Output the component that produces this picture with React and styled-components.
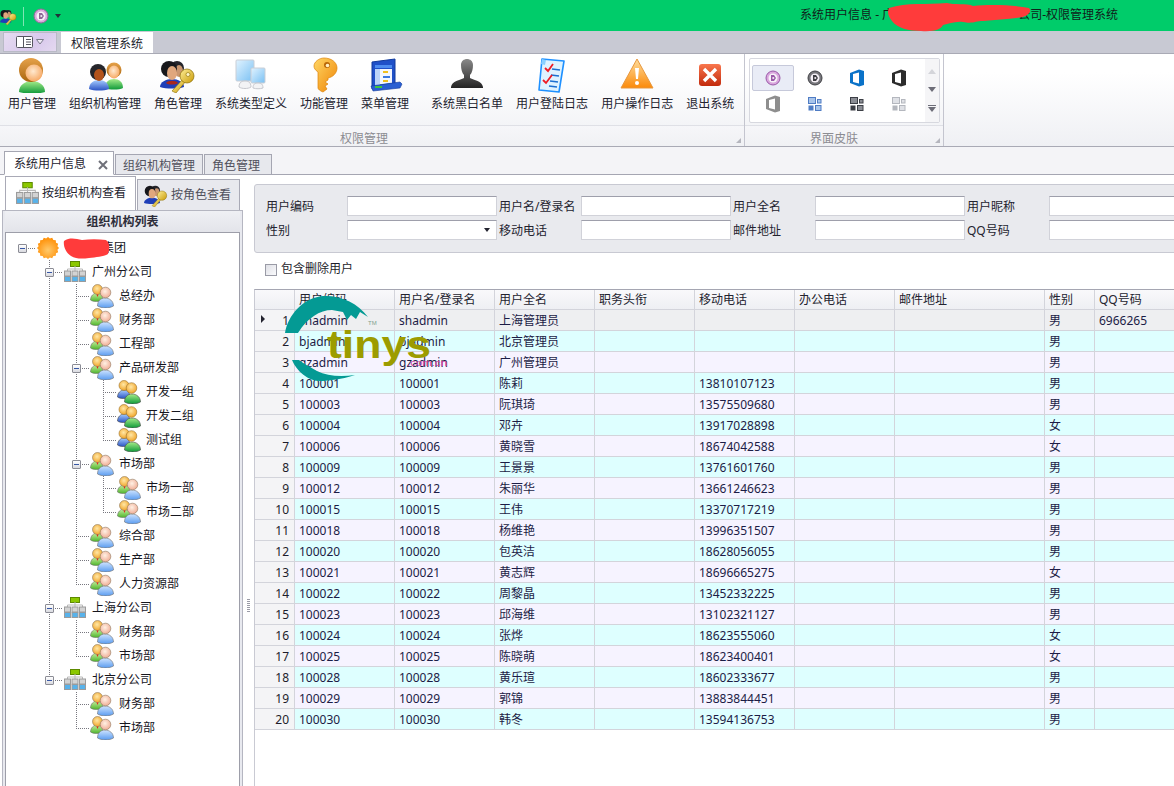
import React from "react";
import styled, { createGlobalStyle } from "styled-components";

const GlobalStyle = createGlobalStyle`
  html, body, #root {
    margin: 0;
    height: 100%;
    overflow: hidden;
    background: #fff;
  }
  body {
    font: 12px/1.2 "Noto Sans", "Noto Sans CJK SC", sans-serif;
    color: #1d1d2b;
  }
  * {
    box-sizing: border-box;
  }
`;

const Page = styled.div`
  position: relative;
  display: flex;
  flex-direction: column;
  height: 786px;
  overflow: hidden;
`;

/* title bar */
const TitleBar = styled.div`
  display: flex;
  align-items: center;
  height: 31px;
  background: #00cc6a;
`;

const QuickTools = styled.div`
  display: flex;
  align-items: center;
  height: 100%;
  padding-top: 1px;
`;

const QuickDivider = styled.span`
  width: 1px;
  height: 19px;
  margin: 0 9px 0 6px;
  background: #7fe5b4;
`;

const SmallCaret = styled.span`
  width: 0;
  height: 0;
  margin-left: 6px;
  border-left: 3px solid transparent;
  border-right: 3px solid transparent;
  border-top: 4px solid #22313a;
`;

const Title = styled.div`
  position: relative;
  margin-left: auto;
  margin-right: 56px;
  color: #10201a;
  white-space: nowrap;
`;

const TitleGap = styled.span`
  display: inline-block;
  width: 124px;
`;

const TitleScribble = styled.svg`
  position: absolute;
  left: 87px;
  top: -6px;
`;

/* ribbon */
const RibbonTabs = styled.div`
  display: flex;
  align-items: flex-end;
  height: 22px;
  padding-left: 3px;
  background: #c8c9d3;
`;

const FileButton = styled.div`
  display: flex;
  align-items: center;
  justify-content: center;
  gap: 2px;
  width: 54px;
  height: 20px;
  margin-bottom: 1px;
  border: 1px solid #b9bac6;
  background: linear-gradient(135deg, #e6dcf1, #d9c9ec 60%, #e4d9f0);
`;

const RibbonTab = styled.div`
  display: flex;
  align-items: center;
  justify-content: center;
  width: 92px;
  height: 21px;
  margin-left: 4px;
  padding-top: 4px;
  background: #fff;
`;

const Ribbon = styled.div`
  display: flex;
  height: 94px;
  border-top: 1px solid #a9aab5;
  border-bottom: 1px solid #a9aab5;
  background: linear-gradient(#fff 20%, #eff0f4);
`;

const RibbonGroup = styled.div`
  display: flex;
  flex-direction: column;
  width: ${(p) => p.$width}px;
  border-right: 1px solid #c4c5cf;
`;

const GroupBody = styled.div`
  display: flex;
  height: 74px;
  padding: 3px 0 2px ${(p) => p.$left || 0}px;
  border-bottom: 1px solid #dfe0e6;
`;

const GroupLabel = styled.div`
  position: relative;
  display: flex;
  align-items: center;
  justify-content: center;
  flex: 1;
  padding: 6px ${(p) => p.$shift}px 0 0;
  color: #8c8c92;
  background: linear-gradient(#f6f6f9, #f0f1f4);
`;

const Launcher = styled.span`
  position: absolute;
  right: 3px;
  bottom: 3px;
  width: 0;
  height: 0;
  border-left: 5px solid transparent;
  border-bottom: 5px solid #b5b6be;
`;

const RibbonItem = styled.div`
  display: flex;
  flex-direction: column;
  align-items: center;
  margin-right: 13px;
  white-space: nowrap;
  color: #23232f;
`;

const ItemIcon = styled.div`
  height: 40px;
  line-height: 0;
`;

const RibbonSep = styled.span`
  width: 1px;
  margin: 0 12px 0 -3px;
  background: #e3e4e9;
`;

const Gallery = styled.div`
  display: flex;
  width: 191px;
  height: 65px;
  margin: 1px 0 0 4px;
  border: 1px solid #d7d8df;
  border-radius: 2px;
  background: #fff;
`;

const GalleryGrid = styled.div`
  display: grid;
  grid-template-columns: repeat(4, 42px);
  grid-auto-rows: 26px;
  width: 175px;
  padding: 6px 0 0 2px;
`;

const GalleryCell = styled.div`
  display: flex;
  align-items: center;
  justify-content: center;
  border: 1px solid ${(p) => (p.$active ? "#c6c9da" : "transparent")};
  border-radius: 2px;
  background: ${(p) => (p.$active ? "#e9ecf6" : "transparent")};
`;

const GalleryScroll = styled.div`
  display: flex;
  flex: 1;
  flex-direction: column;
  align-items: center;
  justify-content: space-around;
  padding: 3px 0;
  background: #f5f5f7;
`;

const ScrollArrow = styled.span`
  width: 0;
  height: 0;
  border-left: 4px solid transparent;
  border-right: 4px solid transparent;
  ${(p) =>
    p.$up
      ? `border-bottom: 5px solid ${p.$color};`
      : `border-top: 5px solid ${p.$color};`}
`;

const ScrollMore = styled.span`
  display: flex;
  flex-direction: column;
  align-items: center;
  gap: 1px;
  &::before {
    content: "";
    width: 8px;
    height: 1px;
    background: #6d6d78;
  }
`;

const RibbonRest = styled.div`
  flex: 1;
`;

/* document tabs */
const DocStrip = styled.div`
  display: flex;
  align-items: flex-end;
  height: 28px;
  padding-left: 4px;
  border-bottom: 1px solid #a5a6b2;
  background: #f4f4f7;
`;

const DocTab = styled.div`
  display: flex;
  align-items: center;
  justify-content: space-between;
  width: ${(p) => p.$width}px;
  height: ${(p) => (p.$active ? 24 : 21)}px;
  margin-right: 1px;
  margin-bottom: -1px;
  padding: 3px 5px 0 ${(p) => (p.$active ? 9 : 7)}px;
  border: 1px solid #a5a6b2;
  border-bottom: ${(p) => (p.$active ? "1px solid #fff" : "1px solid #a5a6b2")};
  background: ${(p) => (p.$active ? "#fff" : "#e7e8ed")};
  color: ${(p) => (p.$active ? "#23232f" : "#50505c")};
`;

const Body = styled.div`
  display: flex;
  flex: 1;
  min-height: 0;
`;

/* left pane */
const LeftPane = styled.div`
  display: flex;
  flex-direction: column;
  width: 241px;
  margin-left: 2px;
  flex-shrink: 0;
`;

const SubTabs = styled.div`
  display: flex;
  align-items: flex-end;
  height: 35px;
  padding-left: 3px;
`;

const SubTab = styled.div`
  display: flex;
  align-items: center;
  gap: 3px;
  width: ${(p) => p.$width}px;
  height: ${(p) => (p.$active ? 34 : 31)}px;
  margin-right: 1px;
  padding-left: ${(p) => (p.$active ? 10 : 6)}px;
  border: 1px solid #a9aab6;
  border-bottom: 0;
  background: ${(p) => (p.$active ? "#fff" : "#e8e9ee")};
  color: ${(p) => (p.$active ? "#23232f" : "#50505c")};
`;

const TreePanel = styled.div`
  display: flex;
  flex-direction: column;
  flex: 1;
  min-height: 0;
  border: 1px solid #b5b6c1;
  border-bottom: 0;
  padding: 0 2px;
  background: #e8e9ef;
`;

const PanelHeader = styled.div`
  display: flex;
  align-items: center;
  justify-content: center;
  height: 21px;
  padding-top: 2px;
  flex-shrink: 0;
  font-weight: 700;
  color: #2d2d3a;
  background: linear-gradient(#eff0f4, #e3e4ea);
`;

const TreeBox = styled.div`
  flex: 1;
  padding: 3px 0 0 3px;
  border: 1px solid #9d9ea9;
  border-bottom: 0;
  background: #fff;
  overflow: hidden;
`;

const TreeRow = styled.div`
  display: flex;
  height: 24px;
  align-items: center;
  color: #16161e;
  white-space: nowrap;
`;

const dots = (dir) =>
  `repeating-linear-gradient(${dir}, #77777f 0 1px, transparent 1px 2px)`;

const Guide = styled.span`
  display: flex;
  align-items: center;
  justify-content: center;
  align-self: stretch;
  flex-shrink: 0;
  width: 27px;
  padding-right: 1px;
  background-repeat: no-repeat;
  background-image: ${(p) =>
    [
      p.$line ? dots("to bottom") : null,
      p.$branch ? dots("to right") : null,
    ]
      .filter(Boolean)
      .join(",") || "none"};
  background-size: ${(p) =>
    [
      p.$line ? `1px ${p.$line === "half" ? "50%" : "100%"}` : null,
      p.$branch ? "14px 1px" : null,
    ]
      .filter(Boolean)
      .join(",") || "auto"};
  background-position: ${(p) =>
    [p.$line ? "13px 0" : null, p.$branch ? "13px 12px" : null]
      .filter(Boolean)
      .join(",") || "0 0"};
`;

const Expander = styled.span`
  display: flex;
  align-items: center;
  justify-content: center;
  width: 9px;
  height: 9px;
  border: 1px solid #8b8c95;
  border-radius: 1px;
  background: linear-gradient(#fff, #d9dae0);
  &::before {
    content: "";
    width: 5px;
    height: 1px;
    background: #3757a5;
  }
`;

const TreeIconSlot = styled.span`
  display: flex;
  justify-content: center;
  width: 24px;
  margin: 0 5px 0 0;
  line-height: 0;
  flex-shrink: 0;
`;

const InlineScribble = styled.svg`
  position: relative;
  z-index: 1;
  margin: 0 -8px 0 -3px;
  flex-shrink: 0;
`;

const Splitter = styled.div`
  display: flex;
  justify-content: center;
  width: 11px;
  padding-top: 424px;
  flex-shrink: 0;
`;

const Grip = styled.span`
  width: 3px;
  height: 14px;
  background: repeating-linear-gradient(#9a9ba6 0 1px, transparent 1px 2px);
`;

/* right pane */
const RightPane = styled.div`
  display: flex;
  flex-direction: column;
  flex: 1;
  min-width: 0;
  padding-top: 9px;
  overflow: hidden;
`;

const FilterBox = styled.div`
  display: grid;
  grid-template-columns: 81px 150px 84px 150px 84px 150px 84px 150px;
  grid-auto-rows: 20px;
  row-gap: 4px;
  align-items: center;
  width: 960px;
  height: 69px;
  padding: 11px 0 0 11px;
  border: 1px solid #c8c9d2;
  border-radius: 3px;
  background: #e9eaee;
  flex-shrink: 0;
`;

const FieldLabel = styled.label`
  padding: 3px 0 0 ${(p) => (p.$first ? 0 : 2)}px;
  color: #23232f;
  white-space: nowrap;
`;

const FieldInput = styled.input`
  width: 100%;
  height: 20px;
  padding: 0 3px;
  border: 1px solid #d1d2d9;
  border-top-color: #9e9fab;
  border-radius: 0;
  background: #fff;
  outline: none;
`;

const SelectBox = styled.div`
  display: flex;
  align-items: center;
  justify-content: flex-end;
  height: 20px;
  padding-right: 6px;
  border: 1px solid #d1d2d9;
  border-top-color: #9e9fab;
  background: #fff;
  &::after {
    content: "";
    border-left: 3px solid transparent;
    border-right: 3px solid transparent;
    border-top: 4px solid #23232f;
  }
`;

const CheckRow = styled.label`
  display: flex;
  align-items: center;
  gap: 4px;
  height: 36px;
  padding: 0 0 3px 11px;
  flex-shrink: 0;
`;

const CheckBox = styled.input`
  appearance: none;
  width: 12px;
  height: 12px;
  margin: 0;
  border: 1px solid #9a9ba6;
  background: linear-gradient(135deg, #dfe0e6, #fafafc);
`;

const GridWrap = styled.div`
  flex: 1;
  min-height: 0;
  border-left: 1px solid #c9cad3;
  border-top: 1px solid #a5a6b2;
  overflow: hidden;
`;

const Grid = styled.table`
  width: 940px;
  table-layout: fixed;
  border-collapse: separate;
  border-spacing: 0;
`;

const HeadCell = styled.th`
  height: 20px;
  padding: 1px 4px 0;
  font-weight: 400;
  text-align: left;
  color: #23232f;
  white-space: nowrap;
  border-right: 1px solid #d3d4db;
  border-bottom: 1px solid #d3d4db;
  background: linear-gradient(#f9f9fb, #eeeff3);
`;

const NumCell = styled.td`
  height: 21px;
  padding: 2px 5px 0 0;
  text-align: right;
  color: #1d1d2b;
  border-right: 1px solid #d3d4db;
  border-bottom: 1px solid #d3d4db;
  background: #f4f4f6;
`;

const Indicator = styled.span`
  float: left;
  width: 0;
  height: 0;
  margin: 1px 0 0 6px;
  border-top: 4px solid transparent;
  border-bottom: 4px solid transparent;
  border-left: 4px solid #23232f;
`;

const Cell = styled.td`
  height: 21px;
  padding: 2px 4px 0;
  color: #1c1c46;
  white-space: nowrap;
  overflow: hidden;
  border-right: 1px solid #d3d4db;
  border-bottom: 1px solid #d3d4db;
  background: ${(p) =>
    p.$selected ? "#eeeff1" : p.$odd ? "#f6f3ff" : "#deffff"};
`;

/* the logo that was stamped over the picture */
const Watermark = styled.svg`
  position: absolute;
  left: 285px;
  top: 290px;
  pointer-events: none;
`;

const Defs = () => (
  <svg width="0" height="0" style={{ display: "block" }}>
    <defs>
      <radialGradient id="skin" cx="45%" cy="40%" r="65%">
        <stop offset="0" stopColor="#ffe9cf" />
        <stop offset="1" stopColor="#f6a45c" />
      </radialGradient>
      <linearGradient id="hair" x1="0" y1="0" x2="0" y2="1">
        <stop offset="0" stopColor="#e6a24a" />
        <stop offset="1" stopColor="#a9650f" />
      </linearGradient>
      <linearGradient id="green" x1="0" y1="0" x2="0" y2="1">
        <stop offset="0" stopColor="#a6ec8a" />
        <stop offset="1" stopColor="#0f9a3a" />
      </linearGradient>
      <linearGradient id="blue" x1="0" y1="0" x2="0" y2="1">
        <stop offset="0" stopColor="#a6ccff" />
        <stop offset="1" stopColor="#2b54c4" />
      </linearGradient>
      <linearGradient id="palegreen" x1="0" y1="0" x2="0" y2="1">
        <stop offset="0" stopColor="#c6efa0" />
        <stop offset="1" stopColor="#4fb52c" />
      </linearGradient>
      <linearGradient id="paleblue" x1="0" y1="0" x2="0" y2="1">
        <stop offset="0" stopColor="#cfe4ff" />
        <stop offset="1" stopColor="#5a9cf0" />
      </linearGradient>
      <radialGradient id="paleskin" cx="45%" cy="40%" r="65%">
        <stop offset="0" stopColor="#fff1e4" />
        <stop offset="1" stopColor="#efa890" />
      </radialGradient>
      <radialGradient id="yellowhead" cx="45%" cy="40%" r="65%">
        <stop offset="0" stopColor="#ffe7a6" />
        <stop offset="1" stopColor="#f0a020" />
      </radialGradient>
      <linearGradient id="gold" x1="0" y1="0" x2="1" y2="1">
        <stop offset="0" stopColor="#fff09a" />
        <stop offset="1" stopColor="#c99a06" />
      </linearGradient>
      <linearGradient id="keyorange" x1="0" y1="0" x2="1" y2="1">
        <stop offset="0" stopColor="#ffd766" />
        <stop offset="1" stopColor="#ef8404" />
      </linearGradient>
      <linearGradient id="screen" x1="0" y1="0" x2="1" y2="1">
        <stop offset="0" stopColor="#e1f3ff" />
        <stop offset="1" stopColor="#79c0f3" />
      </linearGradient>
      <linearGradient id="dark" x1="0" y1="0" x2="0" y2="1">
        <stop offset="0" stopColor="#8a8a8a" />
        <stop offset="1" stopColor="#232323" />
      </linearGradient>
      <linearGradient id="warn" x1="0" y1="0" x2="0" y2="1">
        <stop offset="0" stopColor="#ffdd9c" />
        <stop offset="1" stopColor="#fb8a0a" />
      </linearGradient>
      <linearGradient id="redbox" x1="0" y1="0" x2="0" y2="1">
        <stop offset="0" stopColor="#f9764d" />
        <stop offset="1" stopColor="#c22a0c" />
      </linearGradient>
      <radialGradient id="sun" cx="50%" cy="60%" r="60%">
        <stop offset="0" stopColor="#ffc96b" />
        <stop offset="1" stopColor="#ff8c00" />
      </radialGradient>
    </defs>
  </svg>
);

const UserIcon = () => (
  <svg width="36" height="36" viewBox="0 0 36 36">
    <path d="M5 35c0-7 6-11 13-11s13 4 13 11c-5 2-21 2-26 0z" fill="url(#green)" />
    <circle cx="17" cy="13" r="12" fill="url(#hair)" />
    <circle cx="20" cy="16" r="8.5" fill="url(#skin)" />
  </svg>
);

const GroupIcon = () => (
  <svg width="36" height="36" viewBox="0 0 36 36">
    <path d="M18 31c0-6 4-9 9-9s9 3 9 9c-4 2-14 2-18 0z" fill="url(#green)" />
    <circle cx="27" cy="13" r="7.5" fill="url(#hair)" />
    <ellipse cx="27" cy="15" rx="5.5" ry="6.5" fill="url(#skin)" />
    <path d="M2 32c0-6 5-9 10-9s10 3 10 9c-5 2-15 2-20 0z" fill="url(#blue)" />
    <circle cx="11" cy="15" r="8" fill="#26262b" />
    <ellipse cx="12" cy="18" rx="5" ry="6" fill="#b3531c" />
  </svg>
);

const RoleGlyph = ({ size, detail }) => (
  <svg width={size} height={size} viewBox="0 0 36 36">
    <circle cx="17" cy="11" r="7" fill="#24242a" />
    <ellipse cx="19" cy="14" rx="4" ry="6" fill="#c99670" />
    <path d="M0 30c0-5 6-8 12-8s12 3 12 8c-6 2-18 2-24 0z" fill="#1f3fb8" />
    {detail && <path d="M6 26c2-3 10-3 12 0-2 2-10 2-12 0z" fill="#a9281d" />}
    <circle cx="9" cy="12" r="8" fill="#17171b" />
    <ellipse cx="12" cy="16" rx="5" ry="7" fill="#e0a77d" />
    <path d="M12 34l11-12 3 2-10 12z" fill="url(#gold)" stroke="#8a6c00" strokeWidth=".6" />
    <circle cx="27" cy="19" r="7" fill="url(#gold)" stroke="#8a6c00" strokeWidth=".7" />
    {detail && <circle cx="28" cy="17.5" r="2" fill="#fff6c8" stroke="#8a6c00" strokeWidth=".6" />}
  </svg>
);

const RoleIcon = () => <RoleGlyph size={36} detail />;

const MonitorIcon = () => (
  <svg width="36" height="36" viewBox="0 0 36 36">
    <rect x="3" y="3" width="18" height="21" rx="1" fill="url(#screen)" stroke="#c9ced6" />
    <path d="M6 30c0-5 3-6 6-6s6 1 6 6c-3 2-9 2-12 0z" fill="#f2f3f5" stroke="#c6c8ce" />
    <rect x="18" y="11" width="14" height="15" rx="1" fill="url(#screen)" stroke="#c9ced6" />
    <path d="M20 31c0-4 2-5 5-5s5 1 5 5c-3 1-7 1-10 0z" fill="#f2f3f5" stroke="#c6c8ce" />
  </svg>
);

const KeyIcon = () => (
  <svg width="36" height="36" viewBox="0 0 36 36">
    <path
      d="M18 1c7 0 13 4 13 10 0 5-4 9-9 10v2l-3 2 3 2-3 2 2 3-4 3c-3-1-5-3-5-4v-16c-3-2-4-4-4-6 0-4 5-8 10-8z"
      fill="url(#keyorange)"
      stroke="#dd8207"
      strokeWidth=".7"
    />
    <circle cx="21" cy="8" r="3" fill="#b96808" />
    <circle cx="21.5" cy="8.5" r="1.8" fill="#fff0c4" />
  </svg>
);

const MenuIcon = () => (
  <svg width="36" height="36" viewBox="0 0 36 36">
    <path d="M5 5l23-3v27l-23 3z" fill="#1f50c8" stroke="#123a9c" />
    <rect x="8" y="8" width="17" height="3" fill="#4d8cf0" />
    <path d="M8 12h17v14l-17 2z" fill="#f3f7ff" />
    <path d="M8 12h5v16l-5 .4z" fill="#bcd4f8" />
    <rect x="16" y="14" width="5" height="2" fill="#f0c020" />
    <rect x="16" y="19" width="7" height="2" fill="#3a78e0" />
    <rect x="16" y="23" width="5" height="2" fill="#f0c020" />
    <path d="M4 29l29-4 2 2-2 4-27 3z" fill="#2a5fd2" stroke="#123a9c" strokeWidth=".6" />
    <rect x="8" y="29" width="7" height="2" fill="#3cc43c" />
  </svg>
);

const SilhouetteIcon = () => (
  <svg width="36" height="36" viewBox="0 0 36 36">
    <path
      d="M12 8c0-4 3-6 6-6s6 2 6 6-1 8-3 10v3c4 2 12 3 13 9v1H2v-1c1-6 9-7 13-9v-3c-2-2-3-6-3-10z"
      fill="url(#dark)"
    />
  </svg>
);

const ChecklistIcon = () => (
  <svg width="36" height="36" viewBox="0 0 36 36">
    <path d="M8 2l22 2-5 31-20-2z" fill="#dff3ff" stroke="#1e90ff" strokeWidth="1.6" strokeLinejoin="round" />
    <path d="M8 2l4 1-1 5-4-1z" fill="#8bd0ff" />
    <g stroke="#1c6fd0" strokeWidth="1.6">
      <path d="M18 12l8 1" />
      <path d="M17 18l8 1" />
      <path d="M16 24l8 1" />
      <path d="M15 29l8 1" />
    </g>
    <g fill="none" stroke="#ee1c25" strokeWidth="1.8">
      <path d="M11 11l3 3 5-7" />
      <path d="M9 23l3 3 6-8" />
    </g>
  </svg>
);

const WarnIcon = () => (
  <svg width="36" height="36" viewBox="0 0 36 36">
    <path d="M18 2l16 29H2z" fill="url(#warn)" stroke="#e7973e" strokeLinejoin="round" />
    <path d="M16 11h4l-1 11h-2z" fill="#fff" />
    <circle cx="18" cy="26" r="2" fill="#fff" />
  </svg>
);

const CloseIcon = () => (
  <svg width="36" height="36" viewBox="0 0 36 36">
    <rect x="7" y="7" width="22" height="22" rx="3" fill="url(#redbox)" />
    <path d="M12 12l12 12M24 12L12 24" stroke="#fff" strokeWidth="3.4" />
  </svg>
);

const OrgIcon = ({ size = 22 }) => (
  <svg width={size} height={size} viewBox="0 0 22 22">
    <rect x="6.5" y="0.5" width="9" height="5" fill="#8cc800" stroke="#5d8a00" />
    <path d="M11 5v3M3.5 10V8h15v2M11 8v2" fill="none" stroke="#b9b9b9" />
    {[0, 7.5, 15].map((x) => (
      <g key={x}>
        <rect x={x + 0.5} y="10" width="6" height="5" fill="#d3d3d3" stroke="#9b9b9b" />
        <rect x={x + 0.5} y="15.5" width="6" height="5" fill="#58b2ea" stroke="#9b9b9b" />
      </g>
    ))}
  </svg>
);

const DeptIcon = () => (
  <svg width="24" height="24" viewBox="0 0 24 24">
    <path d="M.5 16c0-4 3-7 6.500-7s6 3 6 7c-3 2-10 2-12.500 0z" fill="url(#palegreen)" stroke="#6f6f6f" strokeWidth=".6" />
    <circle cx="7.500" cy="5.500" r="5" fill="url(#yellowhead)" stroke="#8f7a60" strokeWidth=".6" />
    <path d="M7.500 22c0-5 3-8 7.500-8s8.500 3 8.500 8c-4 2.500-12 2.500-16 0z" fill="url(#paleblue)" stroke="#6f6f6f" strokeWidth=".6" />
    <circle cx="15.500" cy="8.500" r="5.300" fill="url(#paleskin)" stroke="#8f7a60" strokeWidth=".6" />
    <path d="M6.500 10.500h2l-1 2.500z" fill="#e02020" />
  </svg>
);

const TeamIcon = () => (
  <svg width="24" height="24" viewBox="0 0 24 24">
    <path d="M.5 17c0-4 3-7 6.500-7s6 3 6 7c-3 2-10 2-12.500 0z" fill="url(#blue)" stroke="#444" strokeWidth=".6" />
    <circle cx="7" cy="5.500" r="5" fill="url(#yellowhead)" stroke="#9a7430" strokeWidth=".6" />
    <path d="M7.500 22c0-5 3-8 7.500-8s8.500 3 8.500 8c-4 2.500-12 2.500-16 0z" fill="url(#green)" stroke="#444" strokeWidth=".6" />
    <circle cx="14.500" cy="8" r="5.300" fill="url(#yellowhead)" stroke="#9a7430" strokeWidth=".6" />
  </svg>
);

const sunPoints = Array.from({ length: 32 }, (_, i) => {
  const r = i % 2 ? 9.6 : 11;
  const a = (i * Math.PI) / 16;
  return `${(11 + r * Math.cos(a)).toFixed(2)},${(11 + r * Math.sin(a)).toFixed(2)}`;
}).join(" ");

const SunIcon = () => (
  <svg width="22" height="22" viewBox="0 0 22 22">
    <polygon points={sunPoints} fill="url(#sun)" />
  </svg>
);

const DevLogo = ({ fill, ring, size = 16 }) => (
  <svg width={size} height={size} viewBox="0 0 16 16">
    <circle cx="8" cy="8" r="7" fill={fill} stroke={ring} />
    <circle cx="8" cy="8" r="4.500" fill="#f7f2f8" />
    <path d="M6 5h3l2 3-2 3H6z" fill={ring} />
    <path d="M7.500 7h1l1 1-1 1h-1z" fill="#f7f2f8" />
  </svg>
);

const OfficeIcon = ({ color }) => (
  <svg width="16" height="18" viewBox="0 0 16 18">
    <path d="M1 4l9-3.500 5 1.500v14l-5 1.500-9-3.500z" fill={color} />
    <path d="M4 5l6-1.500v11L4 13z" fill="#fff" />
  </svg>
);

const TilesIcon = ({ color, light }) => (
  <svg width="14" height="14" viewBox="0 0 14 14">
    <rect x="0.500" y="0.500" width="7" height="6" fill={light} stroke={color} />
    <rect x="9.500" y="2.500" width="3.500" height="3.500" fill={light} stroke={color} />
    <rect x="0.500" y="8.500" width="5" height="5" fill={color} />
    <rect x="7.500" y="8.500" width="5.500" height="5" fill={light} stroke={color} />
  </svg>
);

const RedBlob = ({ width, height, d, as: Comp = "svg", ...rest }) => (
  <Comp width={width} height={height} viewBox={`0 0 ${width} ${height}`} {...rest}>
    <path d={d} fill="#ff3b3b" />
  </Comp>
);

const ribbonItems = [
  { label: "用户管理", Icon: UserIcon },
  { label: "组织机构管理", Icon: GroupIcon },
  { label: "角色管理", Icon: RoleIcon },
  { label: "系统类型定义", Icon: MonitorIcon },
  { label: "功能管理", Icon: KeyIcon },
  { label: "菜单管理", Icon: MenuIcon },
  { sep: true },
  { label: "系统黑白名单", Icon: SilhouetteIcon },
  { label: "用户登陆日志", Icon: ChecklistIcon },
  { label: "用户操作日志", Icon: WarnIcon },
  { label: "退出系统", Icon: CloseIcon },
];

const fields = [
  ["用户编码", "用户名/登录名", "用户全名", "用户昵称"],
  ["性别", "移动电话", "邮件地址", "QQ号码"],
];

const columns = [
  ["", 40],
  ["用户编码", 100],
  ["用户名/登录名", 100],
  ["用户全名", 100],
  ["职务头衔", 100],
  ["移动电话", 100],
  ["办公电话", 100],
  ["邮件地址", 150],
  ["性别", 50],
  ["QQ号码", 100],
];

const users = [
  ["shadmin", "shadmin", "上海管理员", "", "男", "6966265"],
  ["bjadmin", "bjadmin", "北京管理员", "", "男"],
  ["gzadmin", "gzadmin", "广州管理员", "", "男"],
  ["100001", "100001", "陈莉", "13810107123", "男"],
  ["100003", "100003", "阮琪琦", "13575509680", "男"],
  ["100004", "100004", "邓卉", "13917028898", "女"],
  ["100006", "100006", "黄晓雪", "18674042588", "女"],
  ["100009", "100009", "王景景", "13761601760", "男"],
  ["100012", "100012", "朱丽华", "13661246623", "男"],
  ["100015", "100015", "王伟", "13370717219", "男"],
  ["100018", "100018", "杨维艳", "13996351507", "男"],
  ["100020", "100020", "包英洁", "18628056055", "男"],
  ["100021", "100021", "黄志辉", "18696665275", "女"],
  ["100022", "100022", "周黎晶", "13452332225", "男"],
  ["100023", "100023", "邱海维", "13102321127", "男"],
  ["100024", "100024", "张烨", "18623555060", "女"],
  ["100025", "100025", "陈晓萌", "18623400401", "女"],
  ["100028", "100028", "黄乐瑄", "18602333677", "男"],
  ["100029", "100029", "郭锦", "13883844451", "男"],
  ["100030", "100030", "韩冬", "13594136753", "男"],
];

// guides says which ancestor columns keep their dotted line going
const tree = [
  { name: "集团", kind: "root", open: true, guides: [], last: true },
  { name: "广州分公司", kind: "org", open: true, guides: [false] },
  { name: "总经办", kind: "dept", guides: [false, true] },
  { name: "财务部", kind: "dept", guides: [false, true] },
  { name: "工程部", kind: "dept", guides: [false, true] },
  { name: "产品研发部", kind: "dept", open: true, guides: [false, true] },
  { name: "开发一组", kind: "team", guides: [false, true, true] },
  { name: "开发二组", kind: "team", guides: [false, true, true] },
  { name: "测试组", kind: "team", last: true, guides: [false, true, true] },
  { name: "市场部", kind: "dept", open: true, guides: [false, true] },
  { name: "市场一部", kind: "dept", guides: [false, true, true] },
  { name: "市场二部", kind: "dept", last: true, guides: [false, true, true] },
  { name: "综合部", kind: "dept", guides: [false, true] },
  { name: "生产部", kind: "dept", guides: [false, true] },
  { name: "人力资源部", kind: "dept", last: true, guides: [false, true] },
  { name: "上海分公司", kind: "org", open: true, guides: [false] },
  { name: "财务部", kind: "dept", guides: [false, true] },
  { name: "市场部", kind: "dept", last: true, guides: [false, true] },
  { name: "北京分公司", kind: "org", open: true, last: true, guides: [false] },
  { name: "财务部", kind: "dept", guides: [false, false] },
  { name: "市场部", kind: "dept", last: true, guides: [false, false] },
];

const treeIcons = { root: SunIcon, org: OrgIcon, dept: DeptIcon, team: TeamIcon };

const TreeNode = ({ node }) => {
  const NodeIcon = treeIcons[node.kind];
  const isRoot = node.kind === "root";
  return (
    <TreeRow>
      {node.guides.map((on, i) => (
        <Guide key={i} $line={on ? "full" : null} />
      ))}
      <Guide $line={isRoot ? null : node.last ? "half" : "full"} $branch>
        {node.open && <Expander />}
      </Guide>
      <TreeIconSlot>
        <NodeIcon />
      </TreeIconSlot>
      {isRoot && (
        <RedBlob
          as={InlineScribble}
          width={48}
          height={22}
          d="M2 4C8 0 14 2 20 3c8-1 16-1 24 0 4 3 4 9 2 14-5 3-12 3-19 4-7 1-13 1-18-2C4 16 1 9 2 4z"
        />
      )}
      {node.name}
    </TreeRow>
  );
};

const App = () => {
  return (
    <>
      <GlobalStyle />
      <Defs />
      <Page>
        <TitleBar>
          <QuickTools>
            <RoleGlyph size={17} />
            <QuickDivider />
            <DevLogo fill="#d8a8dc" ring="#8f6a98" />
            <SmallCaret />
          </QuickTools>
          <Title>
            系统用户信息 - 广
            <TitleGap />
            公司-权限管理系统
            <RedBlob
              as={TitleScribble}
              width={146}
              height={30}
              d="M2 6C20 0 40 3 60 1c6 2 20 0 26 3 18-2 40-1 56 2 3 3 0 7-6 9-12 2-26 3-40 4-8 0-10 3-20 1-8-1-14 2-20 3-2 4-8 7-22 6C22 29 10 26 5 19 1 14 0 10 2 6z"
            />
          </Title>
        </TitleBar>

        <RibbonTabs>
          <FileButton>
            <svg width="18" height="12" viewBox="0 0 18 12">
              <rect x="0.500" y="0.500" width="16" height="11" rx="1" fill="#fff" stroke="#55555f" />
              <path d="M7.500 1v10M10 3.500h5M10 6h5M10 8.500h5" stroke="#55555f" />
            </svg>
            <svg width="8" height="6" viewBox="0 0 8 6">
              <path d="M.5.5h7L4 5z" fill="#f0eaf6" stroke="#7d7d8c" />
            </svg>
          </FileButton>
          <RibbonTab>权限管理系统</RibbonTab>
        </RibbonTabs>

        <Ribbon>
          <RibbonGroup $width={745}>
            <GroupBody $left={8}>
              {ribbonItems.map((item, i) =>
                item.sep ? (
                  <RibbonSep key={i} />
                ) : (
                  <RibbonItem key={item.label}>
                    <ItemIcon>
                      <item.Icon />
                    </ItemIcon>
                    {item.label}
                  </RibbonItem>
                )
              )}
            </GroupBody>
            <GroupLabel $shift={16}>
              权限管理
              <Launcher />
            </GroupLabel>
          </RibbonGroup>
          <RibbonGroup $width={199}>
            <GroupBody>
              <Gallery>
                <GalleryGrid>
                  <GalleryCell $active>
                    <DevLogo fill="#d9a6dd" ring="#9a5aa8" />
                  </GalleryCell>
                  <GalleryCell>
                    <DevLogo fill="#77777c" ring="#3f3f44" />
                  </GalleryCell>
                  <GalleryCell>
                    <OfficeIcon color="#0a72c8" />
                  </GalleryCell>
                  <GalleryCell>
                    <OfficeIcon color="#2c2c2c" />
                  </GalleryCell>
                  <GalleryCell>
                    <OfficeIcon color="#8e8e8e" />
                  </GalleryCell>
                  <GalleryCell>
                    <TilesIcon color="#4f7cc4" light="#a8c4ea" />
                  </GalleryCell>
                  <GalleryCell>
                    <TilesIcon color="#3c3f46" light="#8a8d94" />
                  </GalleryCell>
                  <GalleryCell>
                    <TilesIcon color="#b4b7be" light="#dfe1e6" />
                  </GalleryCell>
                </GalleryGrid>
                <GalleryScroll>
                  <ScrollArrow $up $color="#d4d5da" />
                  <ScrollArrow $color="#6d6d78" />
                  <ScrollMore>
                    <ScrollArrow $color="#6d6d78" />
                  </ScrollMore>
                </GalleryScroll>
              </Gallery>
            </GroupBody>
            <GroupLabel $shift={20}>
              界面皮肤
              <Launcher />
            </GroupLabel>
          </RibbonGroup>
          <RibbonRest />
        </Ribbon>

        <DocStrip>
          <DocTab $active $width={110}>
            系统用户信息
            <svg width="10" height="10" viewBox="0 0 10 10">
              <path d="M1 1l8 8M9 1L1 9" stroke="#6f7079" strokeWidth="2" />
            </svg>
          </DocTab>
          <DocTab $width={88}>组织机构管理</DocTab>
          <DocTab $width={68}>角色管理</DocTab>
        </DocStrip>

        <Body>
          <LeftPane>
            <SubTabs>
              <SubTab $active $width={131}>
                <OrgIcon size={23} />
                按组织机构查看
              </SubTab>
              <SubTab $width={103}>
                <RoleGlyph size={24} />
                按角色查看
              </SubTab>
            </SubTabs>
            <TreePanel>
              <PanelHeader>组织机构列表</PanelHeader>
              <TreeBox>
                {tree.map((node, i) => (
                  <TreeNode key={i} node={node} />
                ))}
              </TreeBox>
            </TreePanel>
          </LeftPane>

          <Splitter>
            <Grip />
          </Splitter>

          <RightPane>
            <FilterBox>
              {fields.map((row) =>
                row.map((label, c) => (
                  <React.Fragment key={label}>
                    <FieldLabel $first={c === 0}>{label}</FieldLabel>
                    {label === "性别" ? <SelectBox /> : <FieldInput />}
                  </React.Fragment>
                ))
              )}
            </FilterBox>
            <CheckRow>
              <CheckBox type="checkbox" />
              包含删除用户
            </CheckRow>
            <GridWrap>
              <Grid>
                <colgroup>
                  {columns.map(([title, w]) => (
                    <col key={title} width={w} />
                  ))}
                </colgroup>
                <thead>
                  <tr>
                    {columns.map(([title]) => (
                      <HeadCell key={title}>{title}</HeadCell>
                    ))}
                  </tr>
                </thead>
                <tbody>
                  {users.map((u, i) => {
                    const cellProps = { $selected: i === 0, $odd: i % 2 === 0 };
                    return (
                      <tr key={u[0]}>
                        <NumCell>
                          {i === 0 && <Indicator />}
                          {i + 1}
                        </NumCell>
                        <Cell {...cellProps}>{u[0]}</Cell>
                        <Cell {...cellProps}>{u[1]}</Cell>
                        <Cell {...cellProps}>{u[2]}</Cell>
                        <Cell {...cellProps} />
                        <Cell {...cellProps}>{u[3]}</Cell>
                        <Cell {...cellProps} />
                        <Cell {...cellProps} />
                        <Cell {...cellProps}>{u[4]}</Cell>
                        <Cell {...cellProps}>{u[5]}</Cell>
                      </tr>
                    );
                  })}
                </tbody>
              </Grid>
            </GridWrap>
          </RightPane>
        </Body>

        <Watermark width="165" height="95" viewBox="0 0 165 95">
          <path
            d="M0 43C3 25 18 8 38 6C55 5 73 13 83 27L75 22L71 29L66 25L62 30L58 22L47 20C35 20 22 28 13 43Z"
            fill="#049a94"
          />
          <path
            d="M7 70C12 82 24 92 38 91C50 90 62 88 70 85C55 87 42 86 32 81C25 77 18 73 14 70Z"
            fill="#049a94"
          />
          <text
            x="42"
            y="68"
            fontFamily="Liberation Sans, sans-serif"
            fontWeight="700"
            fontSize="38"
            textLength="104"
            lengthAdjust="spacingAndGlyphs"
            fill="#9c9c00"
          >
            tinys
          </text>
          <text x="83" y="35" fontFamily="Liberation Sans, sans-serif" fontSize="6" fill="#7f9f8f">
            TM
          </text>
          <text
            x="122"
            y="76"
            fontFamily="Liberation Sans, sans-serif"
            fontSize="9"
            textLength="40"
            lengthAdjust="spacingAndGlyphs"
            fill="#d63fa8"
          >
            .com.cn
          </text>
        </Watermark>
      </Page>
    </>
  );
};

export default App;
